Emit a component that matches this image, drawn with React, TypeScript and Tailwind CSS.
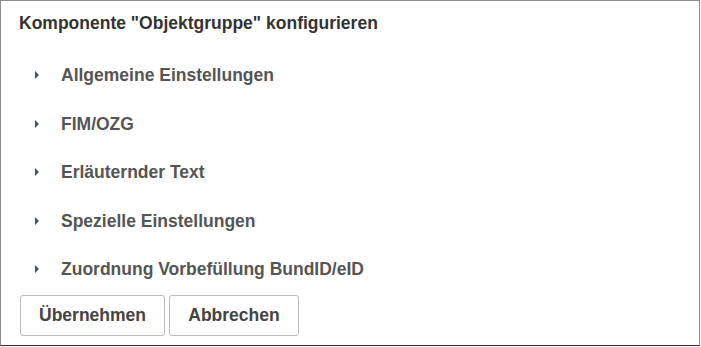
const SECTIONS = [
  "Allgemeine Einstellungen",
  "FIM/OZG",
  "Erläuternder Text",
  "Spezielle Einstellungen",
  "Zuordnung Vorbefüllung BundID/eID",
];

export default function App() {
  return (
    <div className="h-[347px] w-[701px] bg-white font-['Liberation_Sans',Arial,sans-serif]">
      <div className="flex h-[346px] w-[700px] flex-col border border-[#8a8a8a] border-b-[#333]">
        <h1 className="px-[18px] pt-[11px] text-[17.5px] font-bold leading-[22px] text-[#333]">
          Komponente "Objektgruppe" konfigurieren
        </h1>
        <div className="mt-[17px] flex flex-col">
          {SECTIONS.map((s) => (
            <div key={s} className="flex h-[48.5px] items-center pl-[34px]">
              <span className="h-0 w-0 border-y-[4px] border-l-[4px] border-y-transparent border-l-[#3d5566]" />
              <span className="ml-[22px] text-[17.5px] font-bold text-[#555]">{s}</span>
            </div>
          ))}
        </div>
        <div className="mt-auto flex gap-[4px] pb-[9px] pl-[19px]">
          <button className="h-[41px] w-[145px] rounded-[3px] border border-[#bbb] bg-white text-[17.5px] font-bold text-[#444]">
            Übernehmen
          </button>
          <button className="h-[41px] w-[130px] rounded-[3px] border border-[#bbb] bg-white text-[17.5px] font-bold text-[#444]">
            Abbrechen
          </button>
        </div>
      </div>
    </div>
  );
}
